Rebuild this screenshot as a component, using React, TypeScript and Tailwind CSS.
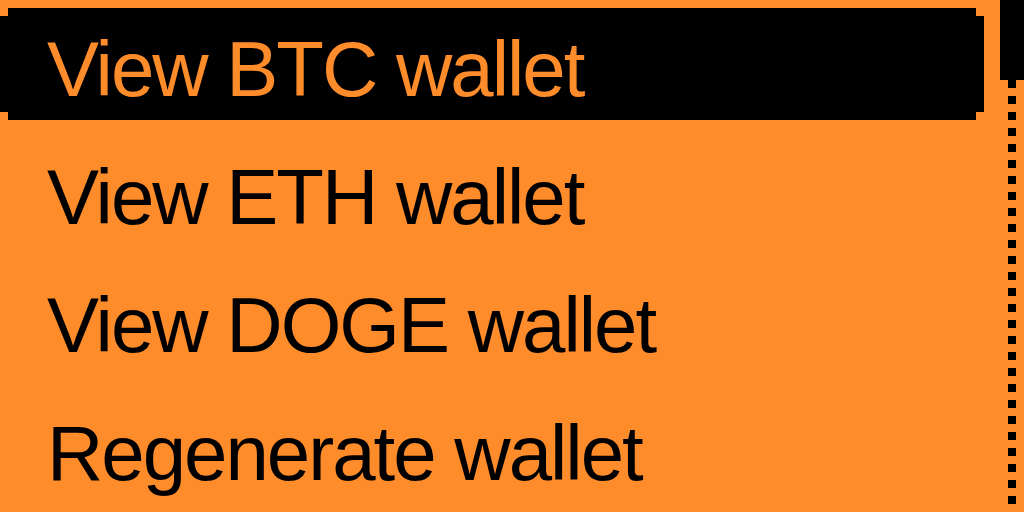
const items = ['View BTC wallet', 'View ETH wallet', 'View DOGE wallet', 'Regenerate wallet'];

const dots = Array.from({ length: 27 }, (_, i) => i);

export default function App() {
  return (
    <div className="w-[1024px] h-[512px] overflow-hidden bg-[#ff8c2a] flex font-['Liberation_Sans',sans-serif]">
      {/* MENU */}
      <div className="w-[1000px] flex flex-col pt-[8px] gap-[16px]">
        {items.map((label, i) => (
          <div
            key={label}
            className={`w-[984px] h-[112px] shrink-0 pl-[47px] pt-[5px] text-[78px] leading-[112px] tracking-[-2px] whitespace-nowrap ${
              i === 0
                ? 'bg-black text-[#ff8c2a] [clip-path:polygon(8px_0,976px_0,976px_8px,984px_8px,984px_104px,976px_104px,976px_112px,8px_112px,8px_104px,0_104px,0_8px,8px_8px)]'
                : 'text-black'
            }`}
          >
            {label}
          </div>
        ))}
      </div>

      {/* SCROLLBAR */}
      <div className="w-[24px] flex flex-col">
        <div className="h-[80px] w-full bg-black shrink-0" />
        {dots.map(d => (
          <div key={d} className="h-[16px] shrink-0 flex justify-center">
            <div className="w-[8px] h-[8px] bg-black" />
          </div>
        ))}
      </div>
    </div>
  );
}
